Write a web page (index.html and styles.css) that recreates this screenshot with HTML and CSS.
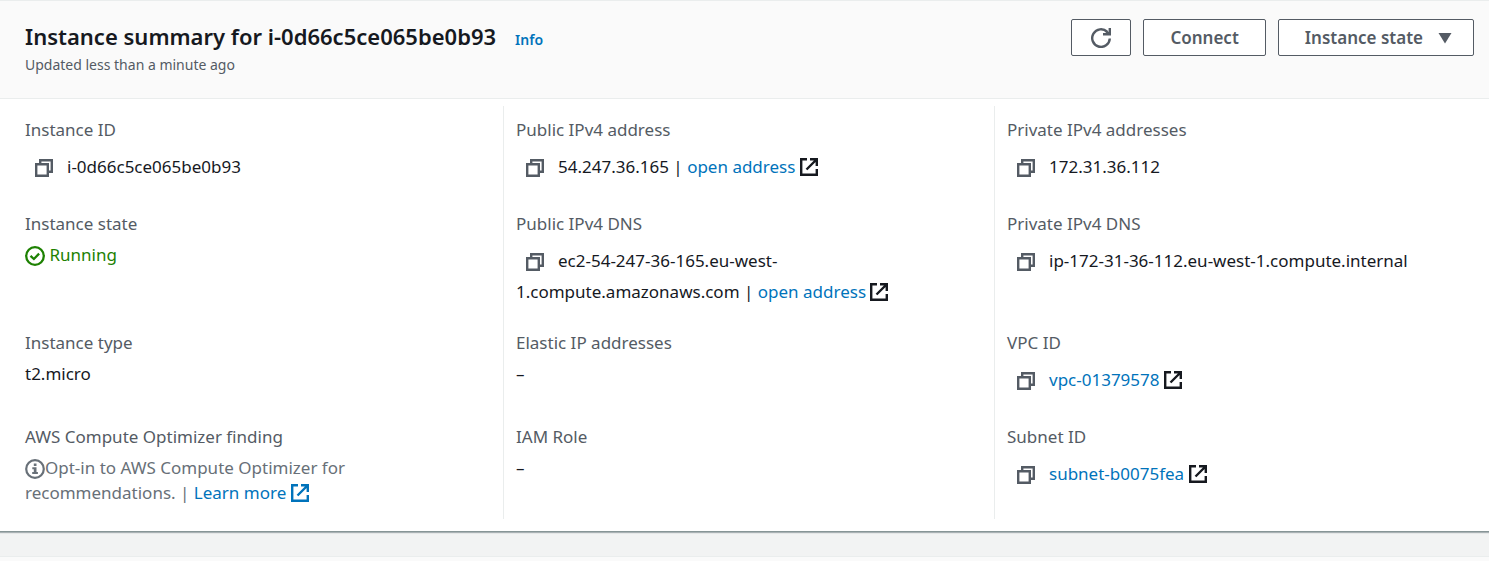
FILE: index.html
```html
<!DOCTYPE html>
<html lang="en">
<head>
<meta charset="utf-8">
<title>Instance summary</title>
<link rel="stylesheet" href="styles.css">
</head>
<body>
<svg class="sprite" aria-hidden="true">
  <symbol id="copy" viewBox="0 0 18 18"><path d="M1.2 5.2h11.6v11.6H1.2zM5.2 5.2v-4h11.6v11.6h-4" fill="none" stroke="currentColor" stroke-width="2.4"/></symbol>
  <symbol id="external" viewBox="0 0 18 18"><path d="M7 1.2H1.2v15.6h15.6V11M10 1.2h6.8V8M16.5 1.5L6.5 11.5" fill="none" stroke="currentColor" stroke-width="2.4"/></symbol>
</svg>
<main>
  <section class="card">
    <header class="card-header">
      <div class="heading">
        <div class="title-row"><h1>Instance summary for i-0d66c5ce065be0b93</h1><a class="info" href="#">Info</a></div>
        <p class="updated">Updated less than a minute ago</p>
      </div>
      <div class="actions">
        <button class="btn btn-icon" aria-label="Refresh"><svg class="refresh" viewBox="0 0 20 20"><path d="M18.8 10.5a8.8 8.8 0 1 1-2.6-6.7" fill="none" stroke="currentColor" stroke-width="2.4"/><path d="M18.8 0v6.3H12M14.5 2.5l3.5 3.5" fill="none" stroke="currentColor" stroke-width="2.4"/></svg></button>
        <button class="btn">Connect</button>
        <button class="btn btn-menu">Instance state<svg class="caret" viewBox="0 0 14 12"><path d="M.5 1h13L7 11.5z" fill="currentColor"/></svg></button>
      </div>
    </header>
    <div class="details">
      <dl class="column">
        <div class="field"><dt>Instance ID</dt><dd><button class="copy" aria-label="Copy instance ID"><svg class="icon"><use href="#copy"/></svg></button>i-0d66c5ce065be0b93</dd></div>
        <div class="field"><dt>Instance state</dt><dd class="running"><svg class="status" viewBox="0 0 20 20"><circle cx="10" cy="10" r="8.8" fill="none" stroke="currentColor" stroke-width="2.3"/><path d="M5.5 9.8l3.4 3.2 5.2-5.4" fill="none" stroke="currentColor" stroke-width="2.3"/></svg> Running</dd></div>
        <div class="field"><dt>Instance type</dt><dd>t2.micro</dd></div>
        <div class="field"><dt>AWS Compute Optimizer finding</dt><dd class="muted"><svg class="status" viewBox="0 0 20 20"><circle cx="10" cy="10" r="8.8" fill="none" stroke="currentColor" stroke-width="2.2"/><path d="M8.8 4.5h2.7v2.4H8.8zM7.3 8.3h4.2v4.6h1.4v2H7.2v-2h1.6v-2.6H7.3z" fill="currentColor"/></svg>Opt-in to AWS Compute Optimizer for recommendations. | <a href="#">Learn more <svg class="icon"><use href="#external"/></svg></a></dd></div>
      </dl>
      <dl class="column">
        <div class="field"><dt>Public IPv4 address</dt><dd><button class="copy" aria-label="Copy public IPv4 address"><svg class="icon"><use href="#copy"/></svg></button>54.247.36.165 | <a href="#">open address</a> <svg class="icon"><use href="#external"/></svg></dd></div>
        <div class="field"><dt>Public IPv4 DNS</dt><dd><button class="copy" aria-label="Copy public IPv4 DNS"><svg class="icon"><use href="#copy"/></svg></button>ec2-54-247-36-165.eu-west-1.compute.amazonaws.com | <a href="#">open address</a> <svg class="icon"><use href="#external"/></svg></dd></div>
        <div class="field"><dt>Elastic IP addresses</dt><dd>–</dd></div>
        <div class="field"><dt>IAM Role</dt><dd>–</dd></div>
      </dl>
      <dl class="column">
        <div class="field"><dt>Private IPv4 addresses</dt><dd><button class="copy" aria-label="Copy private IPv4 address"><svg class="icon"><use href="#copy"/></svg></button>172.31.36.112</dd></div>
        <div class="field"><dt>Private IPv4 DNS</dt><dd><button class="copy" aria-label="Copy private IPv4 DNS"><svg class="icon"><use href="#copy"/></svg></button>ip-172-31-36-112.eu-west-1.compute.internal</dd></div>
        <div class="field"><dt>VPC ID</dt><dd><button class="copy" aria-label="Copy VPC ID"><svg class="icon"><use href="#copy"/></svg></button><a href="#">vpc-01379578</a> <svg class="icon"><use href="#external"/></svg></dd></div>
        <div class="field"><dt>Subnet ID</dt><dd><button class="copy" aria-label="Copy subnet ID"><svg class="icon"><use href="#copy"/></svg></button><a href="#">subnet-b0075fea</a> <svg class="icon"><use href="#external"/></svg></dd></div>
      </dl>
    </div>
  </section>
  <section class="next-card"></section>
</main>
</body>
</html>
```
FILE: styles.css
```css
* { box-sizing: border-box; }
body {
  margin: 0;
  background: #f2f3f3;
  color: #16191f;
  font: 17px/25px "Noto Sans", sans-serif;
}
main { display: flex; flex-direction: column; gap: 24px; min-height: 100vh; }
h1, p, dl, dd { margin: 0; }
a { color: #0073bb; text-decoration: none; }
.sprite { display: none; }
.card {
  background: #fff;
  border-top: 1px solid #eaeded;
  border-bottom: 1px solid #879596;
  box-shadow: 0 1px 1px rgba(0, 28, 36, 0.3);
}
.card-header {
  display: flex;
  justify-content: space-between;
  align-items: flex-start;
  padding: 18px 15px 22px 25px;
  background: #fafafa;
  border-bottom: 1px solid #eaeded;
}
.title-row { display: flex; align-items: baseline; gap: 19px; }
h1 { font-size: 22px; line-height: 35px; font-weight: 600; }
.info { font-size: 14px; font-weight: 600; }
.updated { font-size: 14px; line-height: 22px; color: #545b64; }
.actions { display: flex; gap: 12px; }
.btn {
  display: flex;
  align-items: center;
  gap: 15px;
  height: 37px;
  padding: 0 26px;
  border: 1px solid #545b64;
  border-radius: 2px;
  background: #fff;
  color: #545b64;
  font: inherit;
  font-weight: 600;
}
.btn-icon { padding: 0 19px; }
.btn-menu { padding-right: 21px; }
.refresh, .status { width: 20px; height: 20px; }
.caret { width: 14px; height: 12px; }
.details {
  display: grid;
  grid-template-columns: repeat(3, 1fr);
  grid-template-rows: repeat(4, auto);
  row-gap: 26px;
  padding: 7px 4px 12px 12px;
}
.column {
  display: grid;
  grid-row: span 4;
  grid-template-rows: subgrid;
  padding: 11px 13px 14px;
}
.column + .column { border-left: 1px solid #eaeded; padding-left: 12px; }
dt { color: #545b64; margin-bottom: 6px; }
.icon { width: 18px; height: 18px; vertical-align: -3px; }
.status { vertical-align: middle; }
.copy {
  display: inline-flex;
  align-items: center;
  justify-content: center;
  width: 38px;
  height: 37px;
  margin-right: 4px;
  padding: 2px 0 0;
  border: 0;
  background: none;
  color: #545b64;
  vertical-align: -4px;
}
.running { color: #1d8102; }
.muted { color: #687078; }
.next-card { flex: 1; background: #fafafa; border-top: 1px solid #eaeded; }
```
